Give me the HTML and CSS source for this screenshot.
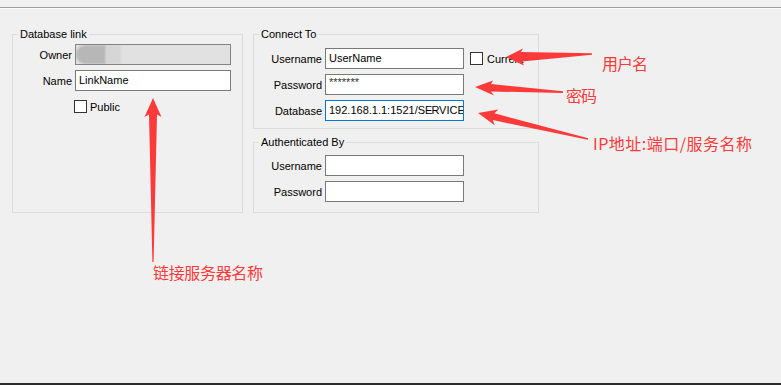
FILE: index.html
```html
<!DOCTYPE html>
<html lang="zh-CN">
<head>
<meta charset="utf-8">
<title>Database link</title>
<link rel="stylesheet" href="styles.css">
</head>
<body>
<div class="window">
  <div class="topbar"></div>
  <div class="panel">
    <fieldset class="group g-link">
      <legend>Database link</legend>
      <div class="form form-link">
        <span class="lbl">Owner</span>
        <div class="field disabled"><span class="blur-a"></span><span class="blur-b"></span></div>
        <span class="lbl">Name</span>
        <div class="field">LinkName</div>
        <span></span>
        <div class="check check-public"><span class="box"></span><span>Public</span></div>
      </div>
    </fieldset>
    <div class="col">
      <fieldset class="group g-conn">
        <legend>Connect To</legend>
        <div class="form form-right">
          <span class="lbl">Username</span>
          <div class="field">UserName</div>
          <div class="check check-current"><span class="box"></span><span>Current</span></div>
          <span class="lbl">Password</span>
          <div class="field pw">*******</div>
          <span></span>
          <span class="lbl">Database</span>
          <div class="field focus">192.168.1.1:1521/SE<span class="caret"></span>RVICE</div>
          <span></span>
        </div>
      </fieldset>
      <fieldset class="group g-auth">
        <legend>Authenticated By</legend>
        <div class="form form-right">
          <span class="lbl">Username</span>
          <div class="field"></div>
          <span></span>
          <span class="lbl">Password</span>
          <div class="field"></div>
          <span></span>
        </div>
      </fieldset>
    </div>
  </div>
  <div class="bottombar"></div>

  <svg class="annot" width="781" height="385" viewBox="0 0 781 385">
    <g class="arrow">
      <polygon points="153,98 161.5,117 157,114.5 153.6,262 152.4,262 149,114.5 144.5,117"/>
      <polygon points="506,57 523,48.5 521,52 592,53.2 592,54.8 522,61.5 524,65.5"/>
      <polygon points="475,87 493,80.5 491,84 563,91.3 563,93 491,91.5 494,95.5"/>
      <polygon points="478,113 498.3,109.6 494.4,113.3 588.2,138.2 587.8,139.8 492.8,120.1 494.7,125.2"/>
    </g>
    <g class="note">
      <text x="602" y="70" textLength="46" lengthAdjust="spacing">用户名</text>
      <text x="566" y="102" textLength="31" lengthAdjust="spacing">密码</text>
      <text x="593" y="150" textLength="159" lengthAdjust="spacing">IP地址:端口/服务名称</text>
      <text x="153" y="279" textLength="110" lengthAdjust="spacing">链接服务器名称</text>
    </g>
  </svg>
</div>
</body>
</html>
```

FILE: styles.css
```css
html, body {
  margin: 0;
  padding: 0;
}

body {
  background: #f0f0f0;
  font-family: "Liberation Sans", Arial, sans-serif;
  font-size: 11px;
  color: #000;
}

.window {
  position: relative;
  height: 385px;
  display: flex;
  flex-direction: column;
  overflow: hidden;
}

.topbar {
  flex: none;
  height: 7px;
  border-bottom: 1px solid #a0a0a0;
  box-shadow: 0 1px 0 #fbfbfb;
}

.panel {
  flex: 1;
  display: flex;
  align-items: flex-start;
  gap: 10px;
  padding: 20px 0 0 12px;
}

.bottombar {
  flex: none;
  height: 2px;
  background: #2b2b2b;
}

.col {
  display: flex;
  flex-direction: column;
  gap: 7px;
}

.group {
  margin: 0;
  padding: 0;
  min-width: 0;
  box-sizing: border-box;
  border: 1px solid #dcdcdc;
}

.group legend {
  margin-left: 5px;
  padding: 0 2px;
  font-size: 11px;
  line-height: 13px;
}

.g-link {
  width: 231px;
  height: 185px;
}

.g-conn {
  width: 286px;
  height: 101px;
}

.g-auth {
  width: 286px;
  height: 77px;
}

.form {
  display: grid;
  column-gap: 3px;
  row-gap: 5px;
  grid-auto-rows: 21px;
  align-items: center;
}

.form-link {
  padding-top: 3px;
  grid-template-columns: 59px 156px;
}

.g-conn .form-right {
  padding-top: 7px;
}

.g-auth .form-right {
  padding-top: 6px;
}

.form-right {
  grid-template-columns: 68px 139px auto;
}

.lbl {
  text-align: right;
  white-space: nowrap;
}

.field {
  height: 21px;
  box-sizing: border-box;
  border: 1px solid #7a7a7a;
  background: #fff;
  padding: 0 3px;
  line-height: 19px;
  white-space: nowrap;
  overflow: hidden;
  display: flex;
  align-items: center;
}

.field.disabled {
  background: #e1e1e1;
  border-color: #838383;
  padding: 0;
}

.blur-a {
  width: 30px;
  height: 19px;
  background: #b7b7b7;
  border-radius: 9px 0 0 9px;
  filter: blur(1.2px);
}

.blur-b {
  width: 15px;
  height: 19px;
  background: #d5d5d5;
  filter: blur(1px);
}

.field.pw {
  align-items: flex-start;
  line-height: 15px;
  color: #333;
}

.field.focus {
  border-color: #0078d7;
}

.caret {
  display: inline-block;
  width: 1px;
  height: 13px;
  background: #000;
  margin: 0 -0.5px;
}

.check {
  display: flex;
  align-items: center;
  gap: 3px;
  white-space: nowrap;
}

.check-public {
  margin-left: -1px;
}

.check-current {
  margin-left: 3px;
  gap: 4px;
}

.box {
  width: 13px;
  height: 13px;
  box-sizing: border-box;
  border: 1px solid #333;
  background: #fff;
  flex: none;
}

.annot {
  position: absolute;
  left: 0;
  top: 0;
  pointer-events: none;
}

.arrow polygon {
  fill: #fd3a3a;
}

.note text {
  fill: #fd3a3a;
  font-family: "Noto Sans CJK SC", "Liberation Sans", sans-serif;
  font-size: 16px;
}
```
